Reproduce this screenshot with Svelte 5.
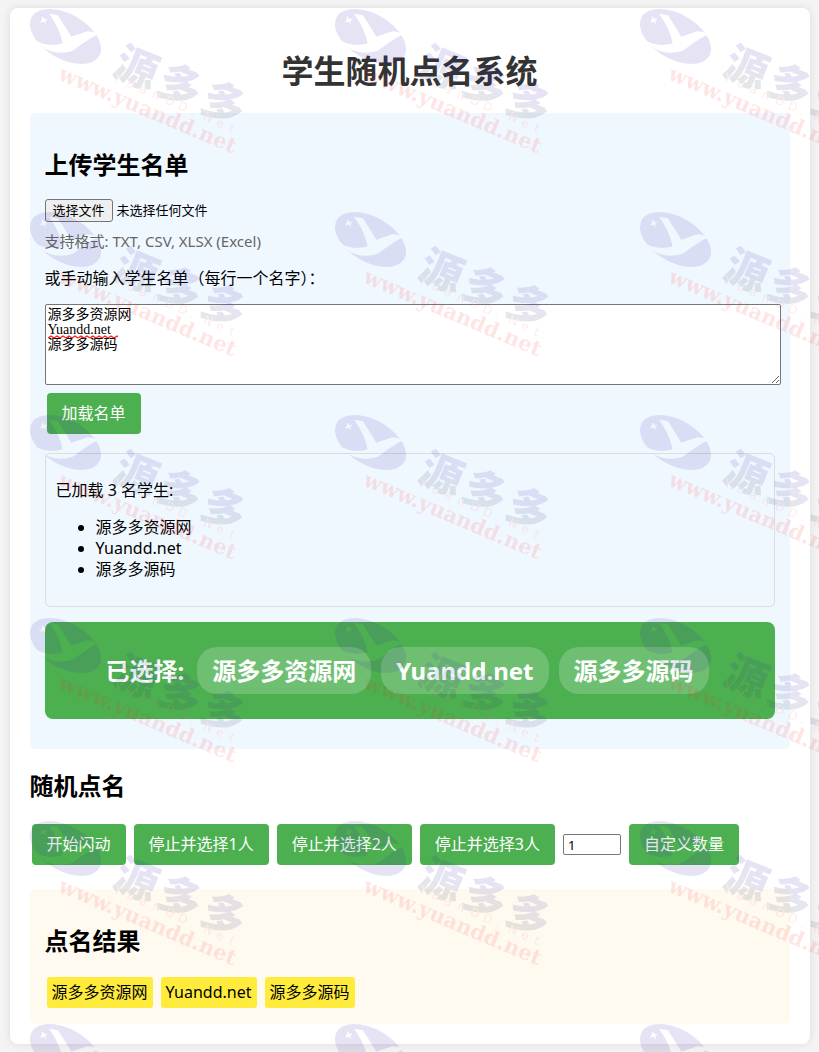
<script lang="ts">
  let text = $state('源多多资源网\nYuandd.net\n源多多源码');
  let students = $state(['源多多资源网', 'Yuandd.net', '源多多源码']);
  let picked = $state(['源多多资源网', 'Yuandd.net', '源多多源码']);
  let fileName = $state('未选择任何文件');
  let count = $state(1);
  let timer: ReturnType<typeof setInterval> | undefined;

  function parse(raw: string) {
    return raw.split(/[\n,]/).map((s) => s.trim()).filter(Boolean);
  }

  function loadNames() {
    students = parse(text);
  }

  async function onFile(e: Event) {
    const file = (e.target as HTMLInputElement).files?.[0];
    if (!file) return;
    fileName = file.name;
    text = await file.text();
    loadNames();
  }

  function pick(n: number) {
    clearInterval(timer);
    timer = undefined;
    picked = [...students].sort(() => Math.random() - 0.5).slice(0, n);
  }

  function startFlash() {
    if (timer || !students.length) return;
    timer = setInterval(() => {
      picked = [students[Math.floor(Math.random() * students.length)]];
    }, 100);
  }
</script>

<div class="page">
  <main class="container">
    <h1>学生随机点名系统</h1>

    <section class="upload">
      <h2>上传学生名单</h2>
      <div class="file-row">
        <input id="file" class="file-input" type="file" accept=".txt,.csv,.xlsx" onchange={onFile} />
        <label class="file-button" for="file">选择文件</label>
        <span>{fileName}</span>
      </div>
      <p class="hint">支持格式: TXT, CSV, XLSX (Excel)</p>
      <label class="names-label" for="names">或手动输入学生名单（每行一个名字）：</label>
      <div class="names">
        <textarea id="names" spellcheck="false" bind:value={text}></textarea>
        <svg class="squiggle" width="70" height="4" aria-hidden="true">
          <defs>
            <pattern id="wave" width="6" height="4" patternUnits="userSpaceOnUse">
              <path d="M0 3 L3 1 L6 3" fill="none" stroke="#f22" stroke-width="1.4" />
            </pattern>
          </defs>
          <rect width="70" height="4" fill="url(#wave)" />
        </svg>
      </div>
      <button class="btn" onclick={loadNames}>加载名单</button>

      <div class="student-list">
        <p>已加载 {students.length} 名学生:</p>
        <ul>
          {#each students as name}
            <li>{name}</li>
          {/each}
        </ul>
      </div>

      <div class="banner" aria-live="polite">
        <span class="banner-label">已选择:</span>
        {#each picked as name}
          <span class="pill">{name}</span>
        {/each}
      </div>
    </section>

    <section class="roll">
      <h2>随机点名</h2>
      <div class="controls">
        <button class="btn" onclick={startFlash}>开始闪动</button>
        {#each [1, 2, 3] as n}
          <button class="btn" onclick={() => pick(n)}>停止并选择{n}人</button>
        {/each}
        <input class="count" type="number" min="1" aria-label="自定义数量" bind:value={count} />
        <button class="btn" onclick={() => pick(count)}>自定义数量</button>
      </div>
    </section>

    <section class="result">
      <h2>点名结果</h2>
      <div class="chips">
        {#each picked as name}
          <span class="chip">{name}</span>
        {/each}
      </div>
    </section>
  </main>

  <!-- tiled watermark -->
  <svg class="watermark" aria-hidden="true">
    <defs>
      <linearGradient id="ink" x1="0" y1="0" x2="0" y2="1">
        <stop offset="0.5" stop-color="#321ea0" />
        <stop offset="0.7" stop-color="#283058" />
      </linearGradient>
      <mask id="cut" maskUnits="userSpaceOnUse" x="20" y="0" width="90" height="75">
        <rect x="20" y="0" width="90" height="75" fill="#fff" />
        <g transform="scale(0.3333)">
          <path d="M147 41 L174 46 Q184 62 214 110 L262 94 Q280 94 296 103 C268 114 238 140 218 152 Q190 162 160 156 C135 150 118 136 100 117 C125 134 155 140 188 130 C182 98 166 66 147 41 Z" />
          <path d="M127 48 L132 56 L143 57 L136 62 L138 72 L130 65 L120 68 L125 60 Z" />
        </g>
      </mask>
      <pattern id="tile" width="305" height="203" patternUnits="userSpaceOnUse">
        <g mask="url(#cut)">
          <ellipse cx="65.5" cy="36.5" rx="39" ry="22.4" transform="rotate(30 65.5 36.5)" fill="#321ea0" />
        </g>
        <g class="mark-name" transform="translate(111 74) rotate(22)">
          {#each '源多多' as ch, i}
            <text x={i * 47} y="0" fill="url(#ink)">{ch}</text>
          {/each}
        </g>
        <g class="mark-sub" transform="translate(113 80) rotate(24)">
          {#each 'YuanDD.Net' as ch, i}
            <text x={i * 14} y="0">{ch}</text>
          {/each}
        </g>
        <text class="mark-url" transform="translate(57 79) rotate(23)">www.yuandd.net</text>
      </pattern>
    </defs>
    <rect width="100%" height="100%" fill="url(#tile)" opacity="0.12" />
  </svg>
</div>

<style>
  :global(body) {
    background: #f4f4f4;
  }

  .page {
    position: relative;
    display: flow-root;
    overflow: hidden;
    font-family: 'Noto Sans', 'Noto Sans CJK SC', sans-serif;
    font-size: 16px;
    line-height: 21px;
    color: #000;
  }

  .container {
    box-sizing: border-box;
    max-width: 800px;
    margin: 8px auto;
    padding: 20px;
    background: #fff;
    border-radius: 8px;
    box-shadow: 0 0 10px rgba(0, 0, 0, 0.1);
  }

  h1 {
    margin: 21px 0;
    font-size: 32px;
    line-height: 43px;
    text-align: center;
    color: #333;
  }

  h2 {
    margin: 20px 0;
    font-size: 24px;
    line-height: 32px;
  }

  .upload,
  .result {
    display: flow-root;
    padding: 0 15px 16px;
    border-radius: 5px;
  }

  .upload {
    background: #f0f8ff;
    padding-bottom: 30px;
  }

  .upload h2,
  .result h2 {
    margin-top: 36px;
  }

  .upload h2 {
    margin-bottom: 18px;
  }

  .roll h2 {
    margin-top: 21px;
  }

  .result {
    margin-top: 22px;
    background: #fffaf0;
  }

  .file-row {
    position: relative;
    display: flex;
    align-items: center;
    gap: 4px;
    font-size: 13px;
  }

  .file-input {
    position: absolute;
    width: 1px;
    height: 1px;
    opacity: 0;
  }

  .file-button {
    padding: 0 7px;
    border: 1px solid #767676;
    border-radius: 3px;
    background: #efefef;
  }

  .hint {
    margin: 9px 0 16px;
    font-size: 15px;
    color: #666;
  }

  .names-label {
    display: block;
    margin-bottom: 15px;
  }

  .names {
    position: relative;
    margin-right: -6px;
  }

  textarea {
    box-sizing: border-box;
    display: block;
    width: 100%;
    height: 81px;
    padding: 2px;
    border: 1px solid #767676;
    border-radius: 2px;
    font-family: 'Liberation Serif', 'Noto Sans CJK SC', serif;
    font-size: 14px;
    line-height: 15px;
    color: #000;
  }

  .squiggle {
    position: absolute;
    left: 3px;
    top: 31px;
  }

  .btn {
    margin: 2px 0;
    padding: 10px 15px;
    border: none;
    border-radius: 4px;
    background: #4caf50;
    color: #fff;
    font: inherit;
    cursor: pointer;
  }

  .btn:hover {
    background: #45a049;
  }

  .upload .btn {
    margin: 8px 2px 19px;
    display: block;
  }

  .student-list {
    padding: 0 10px;
    border: 1px solid #ddd;
    border-radius: 5px;
  }

  .student-list p {
    margin: 26px 0 16px;
  }

  .student-list ul {
    margin: 0 0 26px;
    padding-left: 40px;
  }

  .banner {
    display: flex;
    flex-wrap: wrap;
    justify-content: center;
    align-items: center;
    margin-top: 15px;
    padding: 25px 20px;
    border-radius: 8px;
    background: #4caf50;
    color: #fff;
    font-size: 24px;
    font-weight: bold;
    line-height: 31px;
  }

  .banner-label {
    margin-right: 8px;
  }

  .pill {
    margin: 0 5px;
    padding: 8px 15px;
    border-radius: 20px;
    background: rgba(255, 255, 255, 0.2);
  }

  .controls {
    display: flex;
    flex-wrap: wrap;
    align-items: center;
    gap: 8px;
    padding: 0 2px;
  }

  .count {
    box-sizing: border-box;
    width: 58px;
    height: 21px;
    padding: 1px 4px;
    border: 1px solid #767676;
    border-radius: 2px;
    font-family: inherit;
    font-size: 13px;
  }

  .chips {
    display: flex;
    flex-wrap: wrap;
    gap: 8px;
    padding: 0 2px;
  }

  .chip {
    padding: 5px;
    border-radius: 3px;
    background: #ffeb3b;
  }

  .watermark {
    position: absolute;
    inset: 0;
    width: 100%;
    height: 100%;
    pointer-events: none;
  }

  .mark-name {
    font-family: 'Noto Sans CJK SC', sans-serif;
    font-size: 43px;
    font-weight: 900;
  }

  .mark-sub {
    font-family: 'DejaVu Sans', sans-serif;
    font-size: 12px;
    fill: #f55;
  }

  .mark-url {
    font-family: 'DejaVu Serif', serif;
    font-size: 21px;
    font-weight: bold;
    fill: #ff1e1e;
  }
</style>
